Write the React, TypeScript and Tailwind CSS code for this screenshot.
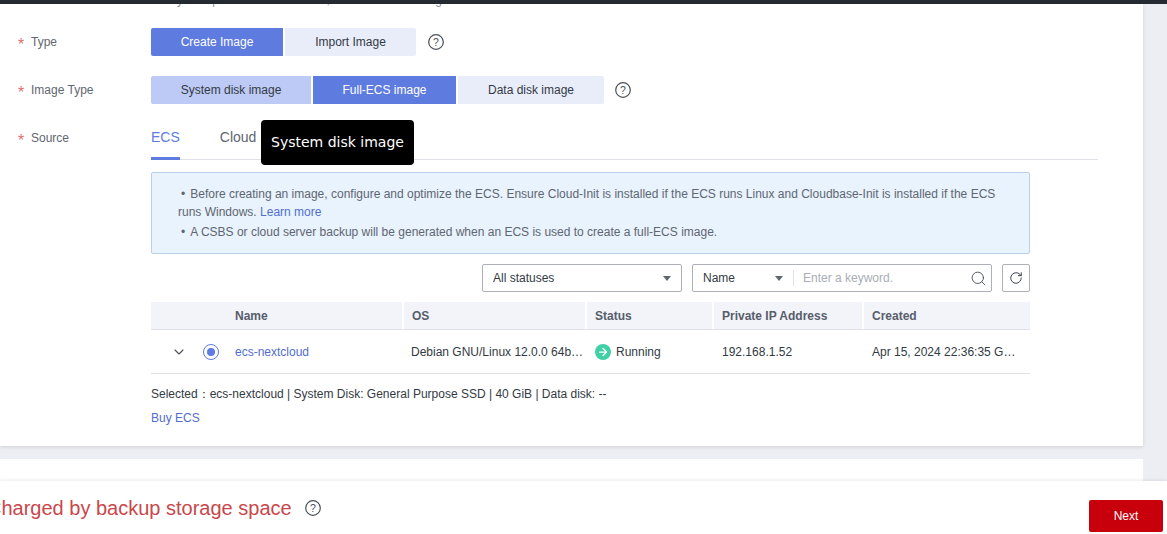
import { ChevronDown, Search, RotateCw, ArrowRight } from "lucide-react";

function Help() {
    return (
        <svg width="18" height="18" viewBox="0 0 18 18" fill="none" className="shrink-0">
            <circle cx="9" cy="9" r="7.3" stroke="#4a4f57" strokeWidth="1.2" />
            <text x="9" y="12.6" textAnchor="middle" fontSize="10.5" fill="#4a4f57" fontFamily="Liberation Sans">?</text>
        </svg>
    );
}

function Star() {
    return <span className="w-[13px] text-[16px] leading-none text-[#e2706f] pt-[5px]">*</span>;
}

function Caret() {
    return <span className="w-0 h-0 border-x-[4px] border-x-transparent border-t-[5px] border-t-[#5f6670]" />;
}

function FormRow({ label, children }: { label: string; children: React.ReactNode }) {
    return (
        <div className="flex items-center h-[28px]">
            <div className="w-[151px] pl-[18px] flex items-center text-[#5f6670]">
                <Star />
                <span>{label}</span>
            </div>
            {children}
        </div>
    );
}

const headCell = "h-full flex items-center border-l-2 border-white pl-[8px]";
const rowCell = "flex items-center pl-[9px] truncate";

function App() {
    return (
        <div className="relative h-[534px] overflow-hidden bg-[#eceef3] font-['Liberation_Sans',sans-serif] text-[12px] text-[#333a44]">
            <div className="h-[4px] bg-[#262a33]" />

            <div className="relative w-[1143px] h-[442px] bg-white shadow-[0_1px_4px_rgba(0,0,0,0.12)] overflow-hidden">
                <p className="h-[14px] -mt-[11px] pl-[151px] leading-[14px] text-[#8a9099] whitespace-nowrap">
                    Easily set up identical ECS hosts, and launch them together
                </p>

                <div className="pt-[21px]">
                    <FormRow label="Type">
                        <div className="flex gap-[2px]">
                            <button className="w-[132px] h-[28px] bg-[#5e7ce0] text-white rounded-l-[2px]">Create Image</button>
                            <button className="w-[131px] h-[28px] bg-[#e9edfa] rounded-r-[2px]">Import Image</button>
                        </div>
                        <div className="ml-[11px]"><Help /></div>
                    </FormRow>
                </div>

                <div className="mt-[20px]">
                    <FormRow label="Image Type">
                        <div className="flex gap-[2px]">
                            <button className="w-[160px] h-[28px] bg-[#bccaf5] rounded-l-[2px]">System disk image</button>
                            <button className="w-[143px] h-[28px] bg-[#5e7ce0] text-white">Full-ECS image</button>
                            <button className="w-[146px] h-[28px] bg-[#e9edfa] rounded-r-[2px]">Data disk image</button>
                        </div>
                        <div className="ml-[10px]"><Help /></div>
                    </FormRow>
                </div>

                <div className="flex mt-[20px]">
                    <div className="w-[151px] h-[28px] pl-[18px] flex items-center text-[#5f6670]">
                        <Star />
                        <span>Source</span>
                    </div>
                    <div className="w-[947px]">
                        <div className="flex gap-[40px] h-[36px] border-b border-[#dfe1e6] text-[14px] text-[#5f6670]">
                            <div className="h-[36px] pt-[3px] border-b-[3px] border-[#5e7ce0] text-[#5e7ce0]">ECS</div>
                            <div className="pt-[3px]">Cloud Server Backup</div>
                        </div>

                        <div className="w-[879px] mt-[12px] h-[82px] bg-[#e8f3fe] border border-[#b9d0e8] rounded-[2px] pl-[26px] pr-[30px] pt-[12px] text-[#5f6670] leading-[18px]">
                            <p className="indent-[3px]"><span className="mr-[5px]">•</span>Before creating an image, configure and optimize the ECS. Ensure Cloud-Init is installed if the ECS runs Linux and Cloudbase-Init is installed if the ECS runs Windows. <span className="text-[#526ecc]">Learn more</span></p>
                            <p className="indent-[3px] mt-[2px]"><span className="mr-[5px]">•</span>A CSBS or cloud server backup will be generated when an ECS is used to create a full-ECS image.</p>
                        </div>

                        <div className="w-[879px] mt-[10px] flex justify-end gap-[10px]">
                            <div className="w-[200px] h-[28px] border border-[#adb0b8] rounded-[2px] px-[10px] flex items-center justify-between">
                                <span>All statuses</span>
                                <Caret />
                            </div>
                            <div className="w-[300px] h-[28px] border border-[#adb0b8] rounded-[2px] flex items-center">
                                <div className="w-[100px] px-[10px] flex items-center justify-between shrink-0">
                                    <span>Name</span>
                                    <Caret />
                                </div>
                                <span className="h-[16px] border-l border-[#dfe1e6]" />
                                <span className="ml-[9px] flex-1 text-[#a9adb5]">Enter a keyword.</span>
                                <Search size={17} strokeWidth={1.3} className="mr-[4px] text-[#4a4f57]" />
                            </div>
                            <div className="w-[28px] h-[28px] border border-[#adb0b8] rounded-[2px] flex items-center justify-center">
                                <RotateCw size={14} strokeWidth={1.6} className="text-[#333a44]" />
                            </div>
                        </div>

                        <div className="w-[879px] mt-[10px] grid grid-cols-[75px_176px_183px_127px_150px_168px] h-[28px] bg-[#f2f4f9] border-b border-[#dfe1e6] font-bold text-[#575d6c] items-center">
                            <div />
                            <div className="pl-[9px]">Name</div>
                            <div className={headCell}>OS</div>
                            <div className={headCell}>Status</div>
                            <div className={headCell}>Private IP Address</div>
                            <div className={headCell}>Created</div>
                        </div>

                        <div className="w-[879px] grid grid-cols-[75px_176px_183px_127px_150px_168px] h-[44px] border-b border-[#dfe1e6]">
                            <div className="flex items-center pl-[20px]">
                                <ChevronDown size={16} strokeWidth={1.6} className="text-[#4a4f57]" />
                                <span className="ml-[16px] w-[16px] h-[16px] rounded-full border border-[#5e7ce0] flex items-center justify-center">
                                    <span className="w-[8px] h-[8px] rounded-full bg-[#5e7ce0]" />
                                </span>
                            </div>
                            <div className={rowCell + " text-[#526ecc]"}>ecs-nextcloud</div>
                            <div className={rowCell}><span className="truncate">Debian GNU/Linux 12.0.0 64bit for</span></div>
                            <div className="flex items-center pl-[10px]">
                                <span className="w-[16px] h-[16px] rounded-full bg-[#3fd0a5] flex items-center justify-center">
                                    <ArrowRight size={12} strokeWidth={2.5} className="text-white" />
                                </span>
                                <span className="ml-[5px]">Running</span>
                            </div>
                            <div className="flex items-center pl-[10px]">192.168.1.52</div>
                            <div className="flex items-center pl-[10px] pr-[14px]"><span className="truncate">Apr 15, 2024 22:36:35 GMT+08:00</span></div>
                        </div>

                        <p className="mt-[13px] leading-[14px]">Selected：ecs-nextcloud | System Disk: General Purpose SSD | 40 GiB | Data disk: --</p>
                        <p className="mt-[10px] leading-[14px] text-[#526ecc]">Buy ECS</p>
                    </div>
                </div>
            </div>

            <div className="w-[1143px] h-[22px] mt-[13px] bg-white" />

            <div className="relative h-[53px] bg-white shadow-[0_-1px_3px_rgba(0,0,0,0.08)] flex items-center justify-between pr-[4px]">
                <div className="flex items-center gap-[12px] -ml-[13px] text-[20px] text-[#c9474b]">
                    <span>Charged by backup storage space</span>
                    <Help />
                </div>
                <button className="w-[74px] h-[32px] mt-[17px] bg-[#c7000b] text-white rounded-[2px]">Next</button>
            </div>

            <div className="absolute left-[261px] top-[120px] w-[153px] h-[45px] bg-black rounded-[4px] flex items-center justify-center text-white font-['DejaVu_Sans',sans-serif] text-[14px]">
                System disk image
            </div>
        </div>
    );
}
export default App;
